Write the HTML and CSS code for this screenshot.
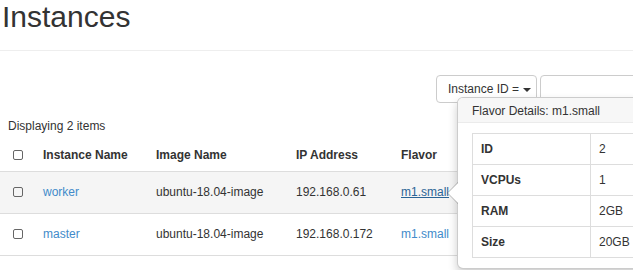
FILE: index.html
```html
<!DOCTYPE html>
<html lang="en">
<head>
<meta charset="UTF-8">
<title>Instances</title>
<link rel="stylesheet" href="styles.css">
</head>
<body>
    <div class="page">
        <div class="page-header">
            <h1>Instances</h1>
        </div>

        <div class="toolbar">
            <button class="btn" type="button">Instance ID = <span class="caret"></span></button>
            <input class="filter" type="text">
        </div>

        <div class="table-caption">Displaying 2 items</div>
        <table class="table">
            <thead>
                <tr>
                    <th class="col-check"><span class="check"></span></th>
                    <th class="col-name">Instance Name</th>
                    <th class="col-image">Image Name</th>
                    <th class="col-ip">IP Address</th>
                    <th>Flavor</th>
                </tr>
            </thead>
            <tbody>
                <tr class="hover">
                    <td class="col-check"><span class="check"></span></td>
                    <td><a href="#">worker</a></td>
                    <td>ubuntu-18.04-image</td>
                    <td>192.168.0.61</td>
                    <td><a href="#" class="active">m1.small</a></td>
                </tr>
                <tr>
                    <td class="col-check"><span class="check"></span></td>
                    <td><a href="#">master</a></td>
                    <td>ubuntu-18.04-image</td>
                    <td>192.168.0.172</td>
                    <td><a href="#">m1.small</a></td>
                </tr>
            </tbody>
        </table>
        <div class="table-caption">Displaying 2 items</div>

        <div class="popover">
            <div class="arrow"></div>
            <h3 class="popover-title">Flavor Details: m1.small</h3>
            <div class="popover-content">
                <table class="details">
                    <tr><th>ID</th><td>2</td></tr>
                    <tr><th>VCPUs</th><td>1</td></tr>
                    <tr><th>RAM</th><td>2GB</td></tr>
                    <tr><th>Size</th><td>20GB</td></tr>
                </table>
            </div>
        </div>
    </div>
</body>
</html>
```

FILE: styles.css
```css
body {
    margin: 0;
    font-family: 'Liberation Sans', Arial, sans-serif;
    font-size: 12px;
    color: #333;
    background: #fff;
    overflow: hidden;
}

.page {
    position: relative;
    width: 633px;
}

.page-header {
    height: 50px;
    border-bottom: 1px solid #eee;
}

.page-header h1 {
    margin: 0;
    padding-left: 2px;
    font-size: 30px;
    font-weight: normal;
    line-height: 33px;
}

.toolbar {
    display: flex;
    gap: 3px;
    padding: 24px 0 0 436px;
    white-space: nowrap;
}

.btn {
    height: 28px;
    padding: 0 5px 0 11px;
    font-family: inherit;
    font-size: 12px;
    color: #333;
    background: #fff;
    border: 1px solid #ccc;
    border-radius: 4px;
    flex-shrink: 0;
}

.caret {
    display: inline-block;
    width: 0;
    height: 0;
    margin-left: 1px;
    vertical-align: middle;
    border-top: 4px solid #333;
    border-left: 4px solid transparent;
    border-right: 4px solid transparent;
}

.filter {
    width: 200px;
    height: 28px;
    box-sizing: border-box;
    border: 1px solid #ccc;
    border-radius: 4px;
    flex-shrink: 0;
}

.table-caption {
    padding-left: 8px;
    line-height: 20px;
    margin-top: 13px;
}

.table {
    width: 100%;
    border-collapse: collapse;
}

.table th,
.table td {
    text-align: left;
    padding: 11px 8px 12px;
    line-height: 18px;
    border-bottom: 1px solid #ddd;
    white-space: nowrap;
}

.table th {
    font-weight: bold;
    padding: 10px 8px 7px;
}

.table tr.hover td {
    background: #f5f5f5;
}

.table .col-check {
    width: 22px;
    padding-left: 13px;
    padding-right: 0;
}

.table .col-name {
    width: 97px;
}

.table .col-image {
    width: 124px;
}

.table .col-ip {
    width: 89px;
}

.check {
    display: inline-block;
    width: 8px;
    height: 8px;
    border: 1px solid #666;
    border-radius: 2px;
    vertical-align: middle;
    margin-top: -2px;
}

a {
    color: #428bca;
    text-decoration: none;
}

a.active {
    color: #2a6496;
    text-decoration: underline;
}

.popover {
    position: absolute;
    left: 457px;
    top: 97px;
    width: 276px;
    background: #fff;
    border: 1px solid rgba(0, 0, 0, 0.2);
    border-radius: 6px;
    box-shadow: 0 5px 10px rgba(0, 0, 0, 0.2);
}

.popover-title {
    margin: 0;
    padding: 5px 14px 3px;
    font-size: 12px;
    font-weight: normal;
    line-height: 16px;
    background: #f7f7f7;
    border-bottom: 1px solid #ebebeb;
    border-radius: 5px 5px 0 0;
}

.popover-content {
    padding: 10px 14px;
}

.details {
    width: 200px;
    border-collapse: collapse;
}

.details th,
.details td {
    text-align: left;
    padding: 8px;
    line-height: 14px;
    border: 1px solid #ddd;
}

.details th {
    width: 101px;
}

.arrow,
.arrow::after {
    position: absolute;
    width: 0;
    height: 0;
    border-style: solid;
    border-color: transparent;
}

.arrow {
    left: -11px;
    top: 84px;
    border-width: 11px 11px 11px 0;
    border-right-color: rgba(0, 0, 0, 0.25);
}

.arrow::after {
    content: "";
    left: 1px;
    bottom: -10px;
    border-width: 10px 10px 10px 0;
    border-right-color: #fff;
}
```
